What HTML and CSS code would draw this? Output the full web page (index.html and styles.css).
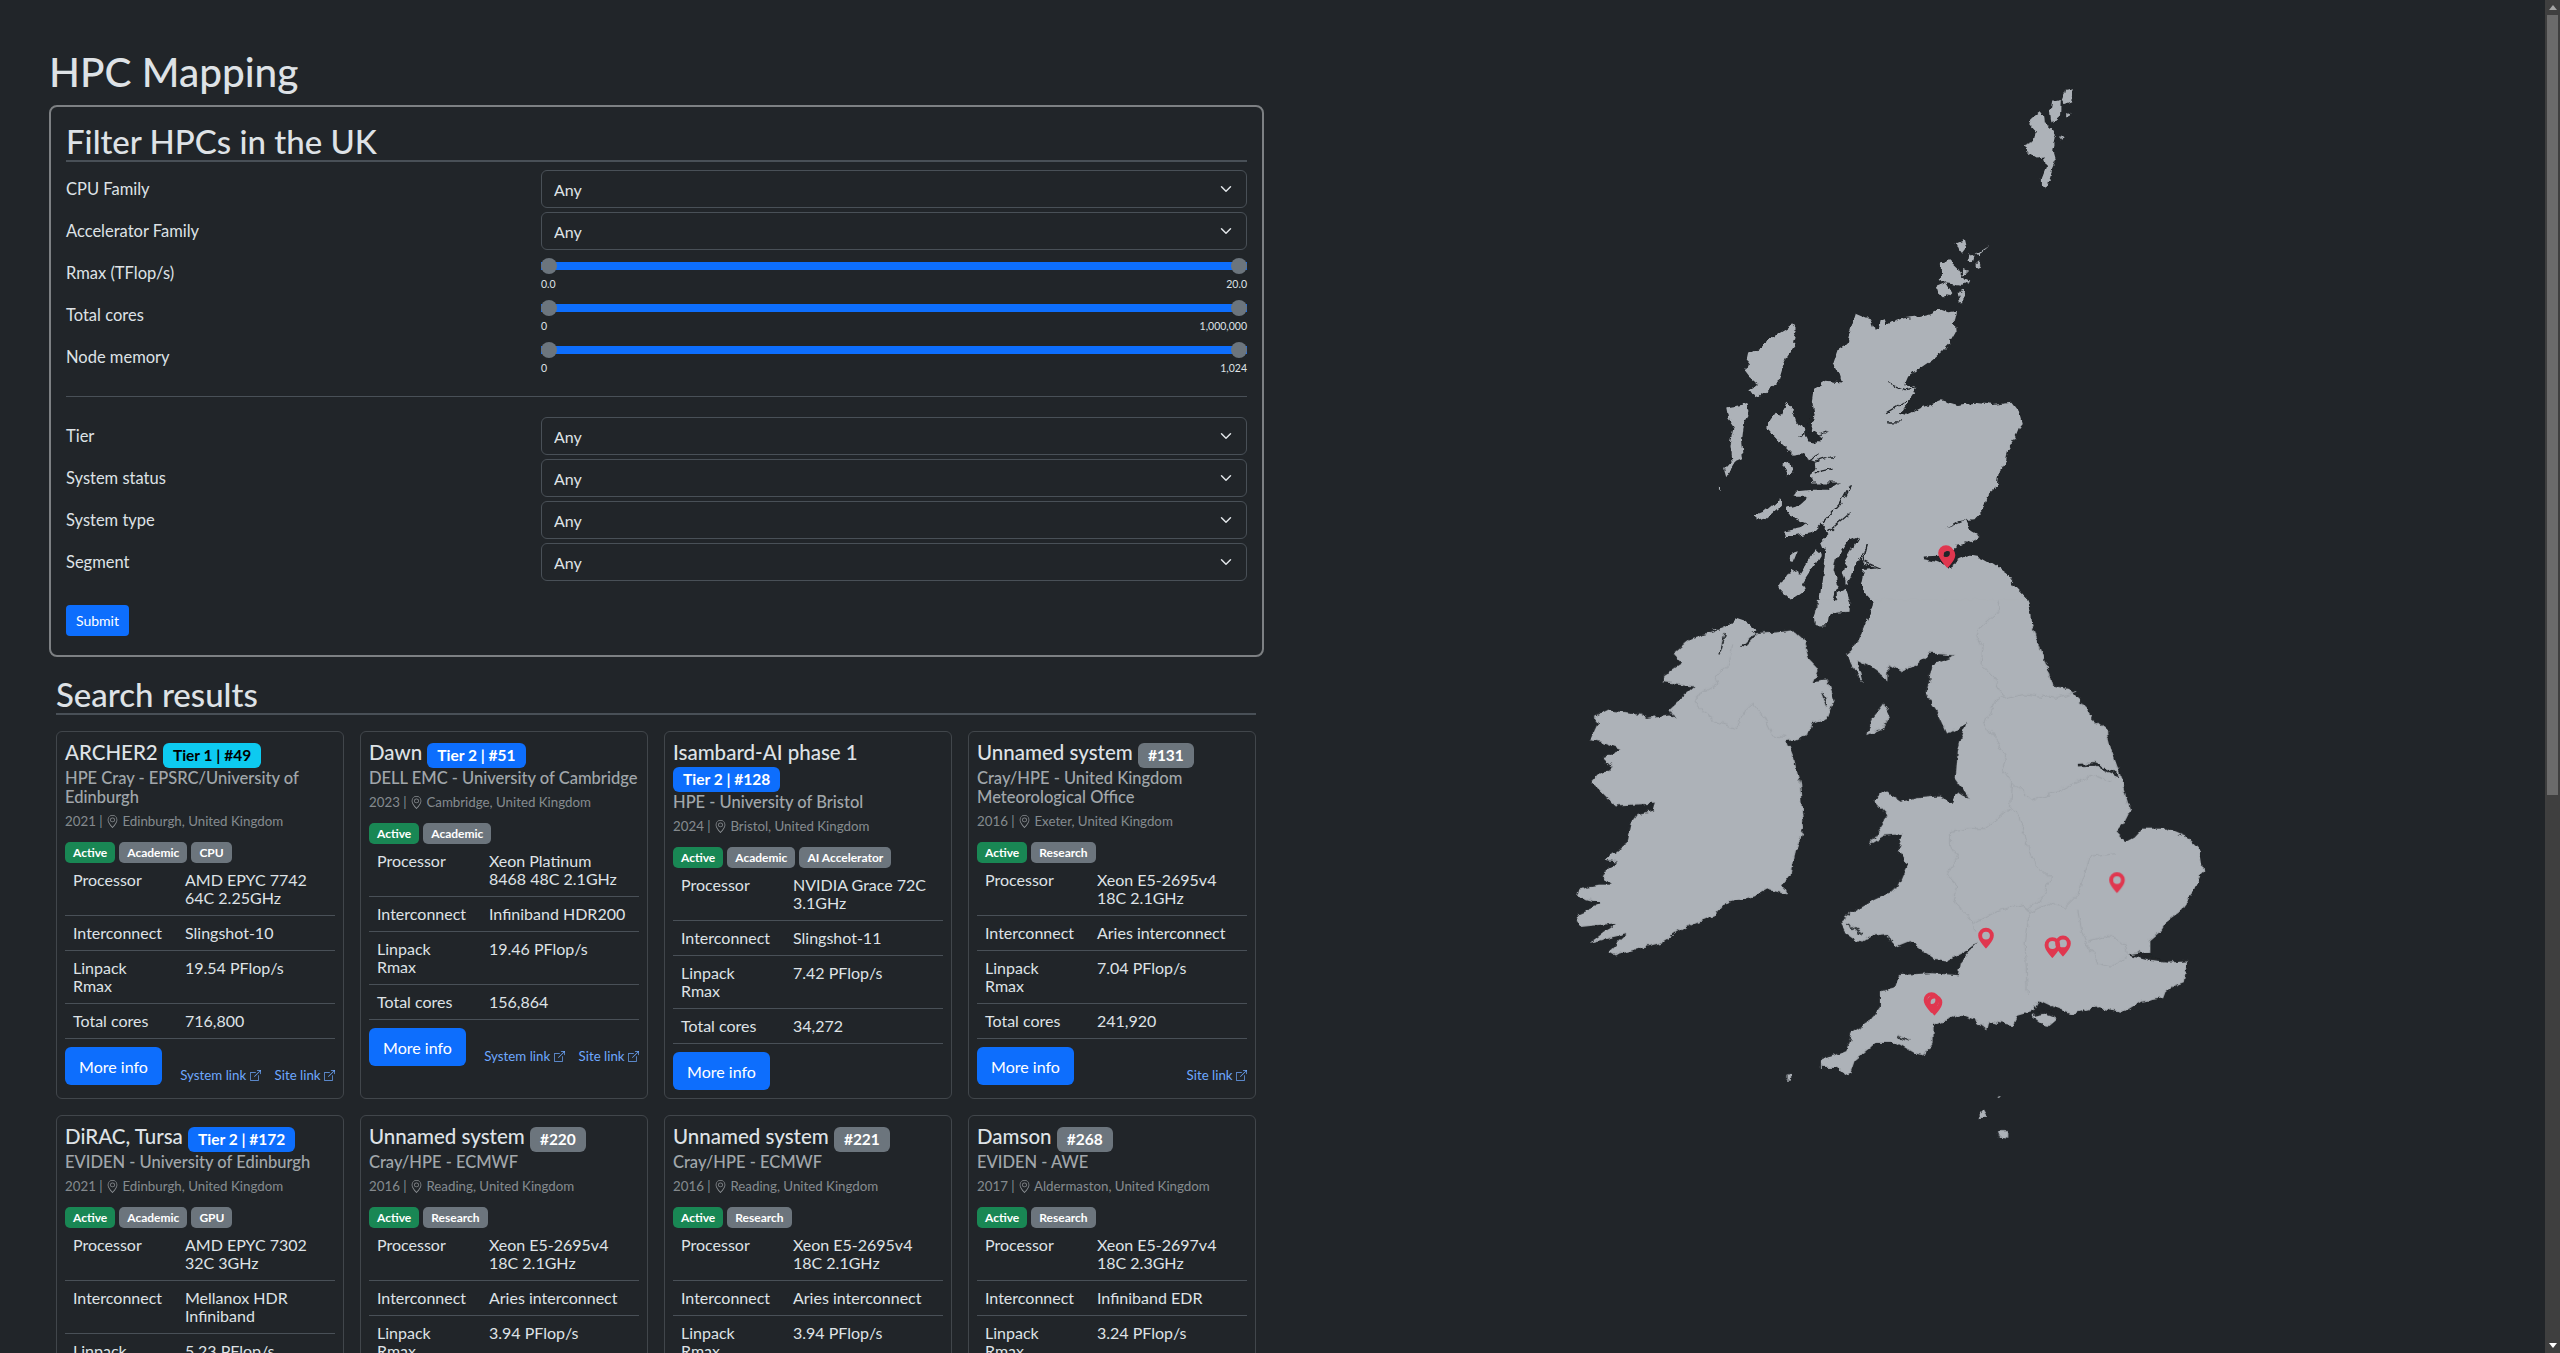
FILE: index.html
```html
<!DOCTYPE html>
<html lang="en">
<head>
  <meta charset="UTF-8" />
  <title>HPC Mapping</title>
  <link rel="stylesheet" href="styles.css">
</head>
<body>
  <svg class="defs" aria-hidden="true">
    <symbol id="geo" viewBox="0 0 16 16">
      <path d="M12.166 8.94c-.524 1.062-1.234 2.12-1.96 3.07A32 32 0 0 1 8 14.58a32 32 0 0 1-2.206-2.57c-.726-.95-1.436-2.008-1.96-3.07C3.304 7.867 3 6.862 3 6a5 5 0 0 1 10 0c0 .862-.305 1.867-.834 2.94M8 16s6-5.686 6-10A6 6 0 0 0 2 6c0 4.314 6 10 6 10"/>
      <path d="M8 8a2 2 0 1 1 0-4 2 2 0 0 1 0 4m0 1a3 3 0 1 0 0-6 3 3 0 0 0 0 6"/>
    </symbol>
    <symbol id="ext" viewBox="0 0 16 16">
      <path fill-rule="evenodd" d="M8.636 3.5a.5.5 0 0 0-.5-.5H1.5A1.5 1.5 0 0 0 0 4.5v10A1.5 1.5 0 0 0 1.5 16h10a1.5 1.5 0 0 0 1.5-1.5V7.864a.5.5 0 0 0-1 0V14.5a.5.5 0 0 1-.5.5h-10a.5.5 0 0 1-.5-.5v-10a.5.5 0 0 1 .5-.5h6.636a.5.5 0 0 0 .5-.5"/>
      <path fill-rule="evenodd" d="M16 .5a.5.5 0 0 0-.5-.5h-5a.5.5 0 0 0 0 1h3.793L6.146 9.146a.5.5 0 1 0 .708.708L15 1.707V5.5a.5.5 0 0 0 1 0z"/>
    </symbol>
  </svg>

  <div class="page">
    <main class="left">
      <h1>HPC Mapping</h1>

      <form class="filter">
        <h2>Filter HPCs in the UK</h2>
        <div class="filter-grid">
          <label>CPU Family</label>
          <select><option>Any</option></select>
          <label>Accelerator Family</label>
          <select><option>Any</option></select>
          <label>Rmax (TFlop/s)</label>
          <div class="slider"><div class="track"><span class="thumb"></span><span class="thumb"></span></div><div class="ends"><span>0.0</span><span>20.0</span></div></div>
          <label>Total cores</label>
          <div class="slider"><div class="track"><span class="thumb"></span><span class="thumb"></span></div><div class="ends"><span>0</span><span>1,000,000</span></div></div>
          <label>Node memory</label>
          <div class="slider"><div class="track"><span class="thumb"></span><span class="thumb"></span></div><div class="ends"><span>0</span><span>1,024</span></div></div>
        </div>
        <hr>
        <div class="filter-grid">
          <label>Tier</label>
          <select><option>Any</option></select>
          <label>System status</label>
          <select><option>Any</option></select>
          <label>System type</label>
          <select><option>Any</option></select>
          <label>Segment</label>
          <select><option>Any</option></select>
        </div>
        <button type="button" class="btn-sm">Submit</button>
      </form>

      <section class="results">
        <h2>Search results</h2>
        <div class="cards">

          <article class="card">
            <h5>ARCHER2 <span class="badge info">Tier 1 | #49</span></h5>
            <h6>HPE Cray - EPSRC/University of Edinburgh</h6>
            <p class="meta">2021 | <svg class="icon geo"><use href="#geo"/></svg> Edinburgh, United Kingdom</p>
            <div class="tags"><span class="tag green">Active</span><span class="tag">Academic</span><span class="tag">CPU</span></div>
            <table>
              <tr><td>Processor</td><td>AMD EPYC 7742 64C 2.25GHz</td></tr>
              <tr><td>Interconnect</td><td>Slingshot-10</td></tr>
              <tr><td>Linpack Rmax</td><td>19.54 PFlop/s</td></tr>
              <tr><td>Total cores</td><td>716,800</td></tr>
            </table>
            <div class="foot">
              <button type="button" class="btn">More info</button>
              <div class="links"><a href="#">System link <svg class="icon"><use href="#ext"/></svg></a><a href="#">Site link <svg class="icon"><use href="#ext"/></svg></a></div>
            </div>
          </article>

          <article class="card">
            <h5>Dawn <span class="badge primary">Tier 2 | #51</span></h5>
            <h6>DELL EMC - University of Cambridge</h6>
            <p class="meta">2023 | <svg class="icon geo"><use href="#geo"/></svg> Cambridge, United Kingdom</p>
            <div class="tags"><span class="tag green">Active</span><span class="tag">Academic</span></div>
            <table>
              <tr><td>Processor</td><td>Xeon Platinum 8468 48C 2.1GHz</td></tr>
              <tr><td>Interconnect</td><td>Infiniband HDR200</td></tr>
              <tr><td>Linpack Rmax</td><td>19.46 PFlop/s</td></tr>
              <tr><td>Total cores</td><td>156,864</td></tr>
            </table>
            <div class="foot">
              <button type="button" class="btn">More info</button>
              <div class="links"><a href="#">System link <svg class="icon"><use href="#ext"/></svg></a><a href="#">Site link <svg class="icon"><use href="#ext"/></svg></a></div>
            </div>
          </article>

          <article class="card">
            <h5>Isambard-AI phase 1 <span class="badge primary">Tier 2 | #128</span></h5>
            <h6>HPE - University of Bristol</h6>
            <p class="meta">2024 | <svg class="icon geo"><use href="#geo"/></svg> Bristol, United Kingdom</p>
            <div class="tags"><span class="tag green">Active</span><span class="tag">Academic</span><span class="tag">AI Accelerator</span></div>
            <table>
              <tr><td>Processor</td><td>NVIDIA Grace 72C 3.1GHz</td></tr>
              <tr><td>Interconnect</td><td>Slingshot-11</td></tr>
              <tr><td>Linpack Rmax</td><td>7.42 PFlop/s</td></tr>
              <tr><td>Total cores</td><td>34,272</td></tr>
            </table>
            <div class="foot">
              <button type="button" class="btn">More info</button>
            </div>
          </article>

          <article class="card">
            <h5>Unnamed system <span class="badge grey">#131</span></h5>
            <h6>Cray/HPE - United Kingdom Meteorological Office</h6>
            <p class="meta">2016 | <svg class="icon geo"><use href="#geo"/></svg> Exeter, United Kingdom</p>
            <div class="tags"><span class="tag green">Active</span><span class="tag">Research</span></div>
            <table>
              <tr><td>Processor</td><td>Xeon E5-2695v4 18C 2.1GHz</td></tr>
              <tr><td>Interconnect</td><td>Aries interconnect</td></tr>
              <tr><td>Linpack Rmax</td><td>7.04 PFlop/s</td></tr>
              <tr><td>Total cores</td><td>241,920</td></tr>
            </table>
            <div class="foot">
              <button type="button" class="btn">More info</button>
              <div class="links"><a href="#">Site link <svg class="icon"><use href="#ext"/></svg></a></div>
            </div>
          </article>

          <article class="card">
            <h5>DiRAC, Tursa <span class="badge primary">Tier 2 | #172</span></h5>
            <h6>EVIDEN - University of Edinburgh</h6>
            <p class="meta">2021 | <svg class="icon geo"><use href="#geo"/></svg> Edinburgh, United Kingdom</p>
            <div class="tags"><span class="tag green">Active</span><span class="tag">Academic</span><span class="tag">GPU</span></div>
            <table>
              <tr><td>Processor</td><td>AMD EPYC 7302 32C 3GHz</td></tr>
              <tr><td>Interconnect</td><td>Mellanox HDR Infiniband</td></tr>
              <tr><td>Linpack Rmax</td><td>5.23 PFlop/s</td></tr>
            </table>
          </article>

          <article class="card">
            <h5>Unnamed system <span class="badge grey">#220</span></h5>
            <h6>Cray/HPE - ECMWF</h6>
            <p class="meta">2016 | <svg class="icon geo"><use href="#geo"/></svg> Reading, United Kingdom</p>
            <div class="tags"><span class="tag green">Active</span><span class="tag">Research</span></div>
            <table>
              <tr><td>Processor</td><td>Xeon E5-2695v4 18C 2.1GHz</td></tr>
              <tr><td>Interconnect</td><td>Aries interconnect</td></tr>
              <tr><td>Linpack Rmax</td><td>3.94 PFlop/s</td></tr>
            </table>
          </article>

          <article class="card">
            <h5>Unnamed system <span class="badge grey">#221</span></h5>
            <h6>Cray/HPE - ECMWF</h6>
            <p class="meta">2016 | <svg class="icon geo"><use href="#geo"/></svg> Reading, United Kingdom</p>
            <div class="tags"><span class="tag green">Active</span><span class="tag">Research</span></div>
            <table>
              <tr><td>Processor</td><td>Xeon E5-2695v4 18C 2.1GHz</td></tr>
              <tr><td>Interconnect</td><td>Aries interconnect</td></tr>
              <tr><td>Linpack Rmax</td><td>3.94 PFlop/s</td></tr>
            </table>
          </article>

          <article class="card">
            <h5>Damson <span class="badge grey">#268</span></h5>
            <h6>EVIDEN - AWE</h6>
            <p class="meta">2017 | <svg class="icon geo"><use href="#geo"/></svg> Aldermaston, United Kingdom</p>
            <div class="tags"><span class="tag green">Active</span><span class="tag">Research</span></div>
            <table>
              <tr><td>Processor</td><td>Xeon E5-2697v4 18C 2.3GHz</td></tr>
              <tr><td>Interconnect</td><td>Infiniband EDR</td></tr>
              <tr><td>Linpack Rmax</td><td>3.24 PFlop/s</td></tr>
            </table>
          </article>

        </div>
      </section>
    </main>

    <aside class="right">
      <svg class="map" viewBox="1280 0 1265 1353" aria-label="Map of the UK and Ireland">
        <defs>
          <path id="pin" d="M8 16s6-5.686 6-10A6 6 0 0 0 2 6c0 4.314 6 10 6 10m0-7a3 3 0 1 1 0-6 3 3 0 0 1 0 6"/>
          <filter id="coast" filterUnits="userSpaceOnUse" x="1500" y="50" width="760" height="1140">
            <feTurbulence type="fractalNoise" baseFrequency=".11" numOctaves="3" seed="4"/>
            <feDisplacementMap in="SourceGraphic" scale="7" xChannelSelector="R" yChannelSelector="G"/>
          </filter>
        </defs>

        <g filter="url(#coast)">
        <!-- north half, traced from the top crop -->
        <g transform="translate(1560,70) scale(.42088,.35714)">
          <path class="land" d="M1200,55 1218,52 1215,90 1198,98 1192,85 1197,70Z M1172,88 1190,84 1188,130 1170,150 1167,120Z M1205,115 1218,122 1205,130Z M1140,118 1150,122 1152,150 1165,160 1178,190 1172,225 1178,250 1170,270 1165,300 1155,332 1145,328 1145,300 1155,270 1150,245 1130,248 1108,232 1105,210 1125,200 1130,175 1115,155 1120,135Z M1188,190 1198,185 1190,200Z"/>
          <path class="land" d="M905,540 925,533 945,555 960,580 975,590 955,605 935,600 920,598 905,585Z M895,605 915,595 930,625 915,640 900,625Z M940,485 960,475 965,500 955,515 945,500Z M985,515 1020,490 1000,510 995,525Z M970,510 980,520 975,540 968,530Z M990,535 1003,550 990,557Z M945,625 960,615 958,650 950,650Z M955,560 970,565 960,575Z"/>
          <path class="land" d="M703,682 720,690 740,700 745,730 755,725 760,700 772,695 775,715 790,705 815,695 850,690 880,682 900,670 920,678 943,675 938,700 940,735 925,765 905,790 880,815 855,835 825,860 818,880 850,890 830,925 810,960 825,965 860,945 905,925 945,938 985,932 1030,938 1075,932 1090,955 1097,985 1085,1020 1065,1060 1060,1095 1045,1125 1040,1165 1015,1190 1005,1230 985,1258 950,1262 915,1285 965,1260 975,1290 997,1305 965,1325 940,1332 925,1345 900,1360 862,1362 862,1370 900,1378 925,1392 950,1372 975,1360 1000,1365 1030,1385 1060,1410 1085,1450 1110,1480 1120,1520 1122,1568 720,1568 735,1520 748,1495 725,1465 715,1440 722,1400 755,1395 725,1385 715,1370 733,1325 718,1355 700,1385 690,1420 680,1440 672,1405 680,1370 710,1310 680,1325 655,1370 650,1400 660,1440 650,1480 640,1520 635,1555 610,1555 605,1530 615,1500 620,1450 625,1400 630,1350 620,1320 640,1300 620,1270 600,1295 560,1305 535,1305 530,1290 570,1280 590,1270 550,1250 540,1225 570,1215 590,1195 555,1195 560,1180 600,1175 640,1175 665,1155 600,1155 595,1140 610,1110 600,1090 620,1070 600,1060 625,1030 598,1010 605,965 600,930 605,890 630,870 670,875 660,840 650,820 660,785 680,770 690,730Z"/>
          <path class="land" d="M540,932 555,950 565,985 580,1010 590,1040 625,1045 620,1070 590,1090 580,1075 555,1080 530,1050 510,1025 490,1000 495,985 510,960 525,965Z M528,1105 545,1100 552,1130 540,1135Z M552,712 562,735 555,775 540,800 530,830 520,870 500,890 470,920 445,900 470,880 450,860 440,845 450,790 490,765 520,735Z M395,945 445,935 450,960 435,990 430,1040 435,1090 415,1100 395,1140 390,1120 410,1095 405,1050 415,1000 400,975Z M550,1350 565,1345 555,1375 548,1372Z M610,1345 620,1355 600,1395 575,1440 565,1420 590,1375Z M540,1410 565,1400 580,1460 550,1485 520,1450Z M463,1245 495,1230 525,1200 525,1220 490,1255 465,1262Z M660,1460 680,1450 692,1490 690,1520 670,1515 660,1490Z M380,1165 385,1165 384,1175 380,1175Z M415,1535 440,1545 465,1568 365,1568 400,1555Z"/>
          <path class="sea" d="M625,1265 665,1215 690,1160"/>
          <path class="sea" d="M780,875 820,895 850,890 M775,960 825,925 M780,985 810,985 M600,965 585,1010 570,1030 M640,1010 600,1030 M650,1080 600,1100 M650,1115 610,1125 M690,1240 640,1290 M730,1330 720,1375 760,1395"/>
        </g>

        <!-- south half, traced from the lower crop -->
        <g transform="translate(1560,600) scale(.42088,.35714)">
          <path class="land" d="M1112,0 1120,60 1140,130 1160,200 1170,240 1210,250 1240,285 1265,330 1300,365 1300,375 1310,420 1330,485 1340,530 1355,590 1340,625 1322,650 1345,678 1365,665 1385,640 1440,640 1490,665 1520,700 1528,760 1510,810 1480,860 1470,875 1440,900 1425,930 1400,955 1400,985 1375,990 1350,995 1400,1010 1440,1015 1490,1012 1482,1070 1440,1090 1432,1115 1380,1125 1340,1155 1280,1140 1215,1158 1175,1140 1140,1120 1130,1150 1085,1165 1075,1190 1020,1180 1015,1205 985,1175 950,1160 900,1185 885,1190 885,1240 865,1275 845,1270 800,1240 750,1240 700,1290 690,1325 680,1332 660,1310 620,1310 620,1290 680,1260 695,1210 735,1180 760,1140 760,1095 795,1085 805,1050 880,1045 945,1050 950,1015 990,960 960,985 920,1010 890,1005 860,980 830,955 795,972 780,935 740,940 710,960 680,935 665,900 700,870 745,840 800,810 825,740 805,700 815,655 770,660 735,685 780,605 745,560 770,535 810,565 850,555 900,550 930,565 945,535 975,558 940,500 945,420 965,345 920,375 895,310 870,265 885,180 940,155 880,150 850,180 810,200 780,180 780,225 740,190 705,170 720,235 700,195 680,150 690,140 700,125 720,80 748,0Z"/>
          <path class="land" d="M770,290 785,320 765,360 730,378 740,335Z M1120,1165 1145,1155 1180,1170 1155,1195Z M990,1450 1005,1430 1015,1450Z M1040,1490 1065,1490 1065,1505 1045,1503Z M1040,1388 1050,1385 1045,1392Z M538,1332 548,1330 546,1346 538,1346Z M610,0 665,0 690,35 640,40 625,70 607,70Z"/>
          <path class="land" d="M415,55 467,95 520,90 555,85 578,110 590,160 615,190 600,230 635,225 650,280 635,330 600,345 590,375 565,390 540,395 555,440 570,510 575,590 580,640 560,700 550,770 530,800 540,825 490,810 460,830 390,850 370,880 300,915 240,960 190,975 130,995 115,985 160,935 70,960 135,905 50,915 40,880 100,850 40,830 45,810 90,800 120,800 100,765 135,735 105,730 160,680 170,625 185,600 220,590 225,570 130,575 75,510 90,490 125,470 100,440 145,420 100,400 70,395 90,345 80,330 115,310 190,318 205,330 260,320 275,335 260,305 320,240 245,230 245,210 290,175 270,150 310,110 390,80Z"/>
          <path class="sea wide" d="M1228,462 1270,460 1325,490 M1375,990 1425,1010 M1140,1125 1125,1160 1180,1148"/>
          <path class="sea" d="M680,905 720,935 M800,1220 830,1235 M395,95 380,155 M622,255 636,300"/>
          <path class="sea wide" d="M435,130 462,98"/>
          <path class="border" d="M1040,0 1045,30 1000,75 990,100 1005,130 1000,180 1040,230 1050,270 1030,290 1010,350 1040,400 1060,440 1050,470 1075,510 M1050,275 1100,262 1180,275 1230,255 M1075,510 1120,560 1180,540 1220,515 1270,490 1310,510 M1075,510 1070,580 1090,600 1100,650 1110,690 1130,740 1165,780 1150,830 1110,870 M1070,585 1010,640 970,640 930,650 930,690 945,720 920,770 945,800 935,850 980,900 990,925 M985,905 1040,870 1100,850 1115,880 1105,960 1110,1100 M1115,875 1160,850 1200,860 1230,825 1260,720 1320,710 M1230,870 1240,930 1250,960 1280,1020 1310,1030 1350,990 M1255,955 1300,940 1345,965 1350,990 M320,275 335,310 380,345 420,360 440,310 460,290 480,320 505,380 540,385 M320,275 375,235 370,215 400,185 410,130"/>
        </g>
        </g>

        <use href="#pin" class="marker" transform="translate(1935.6,545.2) scale(1.3)"/>
        <use href="#pin" class="marker" transform="translate(1937.1,547.2) scale(1.3)"/>
        <use href="#pin" class="marker" transform="translate(2106.6,872.2) scale(1.3)"/>
        <use href="#pin" class="marker" transform="translate(1975.6,927.8) scale(1.3)"/>
        <use href="#pin" class="marker" transform="translate(2042,937.2) scale(1.3)"/>
        <use href="#pin" class="marker" transform="translate(2052.6,935.6) scale(1.3)"/>
        <use href="#pin" class="marker" transform="translate(1921.1,992.2) scale(1.3)"/>
        <use href="#pin" class="marker" transform="translate(1924.1,994.7) scale(1.3)"/>
      </svg>
    </aside>

    <div class="scrollbar" aria-hidden="true">
      <span class="arrow up"></span>
      <div class="scroll-area"><span class="scroll-thumb"></span></div>
      <span class="arrow down"></span>
    </div>
  </div>
</body>
</html>
```

FILE: styles.css
```css
* { box-sizing: border-box; }

html, body {
  margin: 0;
  height: 100%;
  overflow: hidden;
}
body {
  background: #212529;
  color: #dee2e6;
  font-family: "Lato", "Noto Sans", sans-serif;
  font-size: 16px;
}
.defs { display: none; }

.page {
  display: flex;
  height: 100vh;
  overflow: hidden;
}
.left {
  flex: 0 0 1280px;
  padding: 48px 16px 0 49px;
}
.right { flex: 1; }
.map { display: block; width: 100%; height: 100%; }

h1, h2, h5, h6 { margin: 0; font-weight: 500; line-height: 1.2; }
h1 { font-size: 40.5px; line-height: 48px; margin-bottom: 9px; }
h2 { font-size: 33px; line-height: 36px; border-bottom: 2px solid #495057; height: 39px; }

/* filter panel */
.filter {
  border: 2px solid #7d8083;
  border-radius: 8px;
  padding: 16px 15px 19px;
}
.filter-grid {
  display: grid;
  grid-template-columns: 475px 1fr;
  grid-auto-rows: 38px;
  row-gap: 4px;
  align-items: center;
  margin-top: 8px;
}
.filter-grid label { font-size: 16.5px; }
.filter hr {
  border: 0;
  border-top: 1px solid #495057;
  margin: 20px 0 0;
}
.filter hr + .filter-grid { margin-top: 20px; }

select {
  appearance: none;
  width: 100%;
  height: 38px;
  padding: 6px 36px 6px 12px;
  font: inherit;
  color: #dee2e6;
  background: #212529 url("data:image/svg+xml,%3csvg xmlns='http://www.w3.org/2000/svg' viewBox='0 0 16 16'%3e%3cpath fill='none' stroke='%23dee2e6' stroke-linecap='round' stroke-linejoin='round' stroke-width='2' d='m2 5 6 6 6-6'/%3e%3c/svg%3e") no-repeat right 12px center / 16px 12px;
  border: 1px solid #495057;
  border-radius: 6px;
}

.slider { align-self: start; padding-top: 4px; }
.track {
  display: flex;
  justify-content: space-between;
  align-items: center;
  height: 8px;
  margin-top: 4px;
  background: #0d6efd;
}
.thumb {
  width: 16px;
  height: 16px;
  border-radius: 50%;
  background: #6c757d;
}
.ends {
  display: flex;
  justify-content: space-between;
  margin-top: 7px;
  font-size: 10.5px;
  line-height: 14px;
}

.btn-sm, .btn {
  border: 0;
  color: #fff;
  background: #0d6efd;
  font: inherit;
}
.btn-sm {
  display: block;
  width: 63px;
  height: 31px;
  margin-top: 24px;
  padding: 0;
  font-size: 14px;
  border-radius: 4px;
}
.btn {
  width: 97px;
  height: 38px;
  padding: 0;
  border-radius: 6px;
}

/* results */
.results { margin: 19px 8px 0 7px; }
.cards {
  display: grid;
  grid-template-columns: repeat(4, 1fr);
  gap: 16px;
  margin-top: 16px;
}
.card {
  border: 1px solid #41464b;
  border-radius: 6px;
  padding: 8px;
}
.card h5 { font-size: 20.5px; line-height: 24px; margin-bottom: 1px; }
.card h6 { font-size: 16.5px; line-height: 19.2px; color: rgba(222, 226, 230, .7); }
.meta {
  margin: 5px 0 11px;
  font-size: 13.3px;
  line-height: 19px;
  color: rgba(222, 226, 230, .55);
}
.icon {
  width: 11px;
  height: 11px;
  vertical-align: -1px;
  fill: currentColor;
}
.icon.geo { width: 13px; height: 13px; vertical-align: -2px; }
.badge {
  display: inline-block;
  padding: 5px 10px;
  font-size: 15.5px;
  line-height: 15px;
  font-weight: 700;
  border-radius: 6px;
  color: #fff;
  vertical-align: -1px;
}
.badge.info { background: #0dcaf0; color: #000; }
.badge.primary { background: #0d6efd; }
.badge.grey { background: #6c757d; }

.tags { display: flex; gap: 4px; }
.tag {
  height: 21px;
  padding: 0 8px;
  font-size: 12px;
  line-height: 21px;
  font-weight: 700;
  color: #fff;
  background: #6c757d;
  border-radius: 5px;
}
.tag.green { background: #198754; }

table {
  width: 100%;
  border-collapse: collapse;
  table-layout: fixed;
}
td {
  padding: 8px;
  line-height: 18px;
  vertical-align: top;
  border-bottom: 1px solid #495057;
}
td:first-child { width: 112px; }

.foot {
  display: flex;
  justify-content: space-between;
  align-items: flex-end;
  margin-top: 8px;
}
.links { display: flex; gap: 14px; margin-left: auto; }
.links a {
  font-size: 13.3px;
  line-height: 19px;
  color: #6ea8fe;
  text-decoration: none;
}

/* scrollbar drawn to match the window chrome */
.scrollbar {
  flex: 0 0 15px;
  display: flex;
  flex-direction: column;
  align-items: center;
  background: #3f3f3f;
}
.arrow {
  flex: 0 0 15px;
  width: 0;
  height: 0;
  border-left: 4px solid transparent;
  border-right: 4px solid transparent;
}
.arrow.up { border-bottom: 5px solid #a5a5a5; margin-top: 5px; flex-basis: 5px; margin-bottom: 5px; }
.arrow.down { border-top: 5px solid #fff; margin-bottom: 5px; flex-basis: 5px; margin-top: 5px; }
.scroll-area { flex: 1; width: 100%; padding: 0 2px; }
.scroll-thumb { display: block; height: 780px; background: #6b6b6b; }

/* map */
.land { fill: #adb2b8; }
.sea { fill: none; stroke: #212529; stroke-width: 3.5; stroke-linejoin: round; }
.sea.wide { stroke-width: 7; }
.border { fill: none; stroke: #a0a5ab; stroke-width: 1; vector-effect: non-scaling-stroke; }
.marker { fill: #e0374f; }
```
